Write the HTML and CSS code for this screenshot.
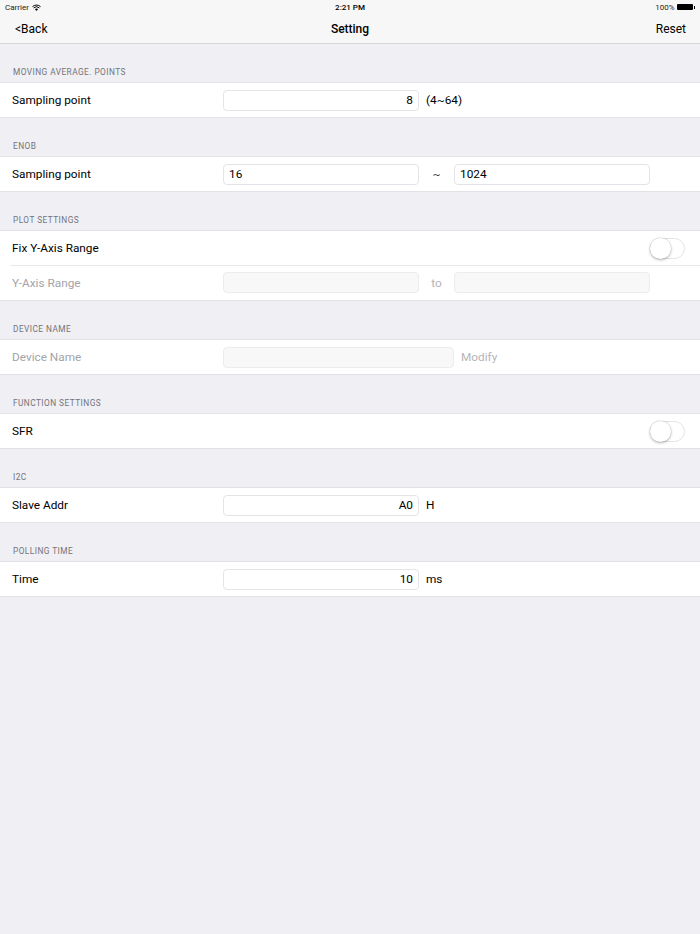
FILE: index.html
```html
<!DOCTYPE html>
<html>
<head>
<meta charset="utf-8">
<link rel="stylesheet" href="styles.css">
</head>
<body>
<div class="top">
  <div class="status">
    <span class="carrier">Carrier
      <svg class="wifi" width="9" height="7" viewBox="0 0 9 7"><path d="M4.5 7 L2.9 5.1 A2.4 2.4 0 0 1 6.1 5.1 Z" fill="#000"/><path d="M1.7 3.9 A4.2 4.2 0 0 1 7.3 3.9" stroke="#000" stroke-width="1" fill="none"/><path d="M0.5 2.6 A6 6 0 0 1 8.5 2.6" stroke="#000" stroke-width="1" fill="none"/></svg>
    </span>
    <span class="time">2:21 PM</span>
    <span class="batt">100%
      <span class="battery"></span><span class="battery-tip"></span>
    </span>
  </div>
  <div class="nav">
    <span class="nav-left">&lt;Back</span>
    <span class="nav-title">Setting</span>
    <span class="nav-right">Reset</span>
  </div>
</div>

<div class="section-header">MOVING AVERAGE. POINTS</div>
<div class="group">
  <div class="row">
    <span class="label">Sampling point</span>
    <span class="field right">8</span>
    <span class="suffix">(4~64)</span>
  </div>
</div>

<div class="section-header">ENOB</div>
<div class="group">
  <div class="row">
    <span class="label">Sampling point</span>
    <span class="field">16</span>
    <span class="mid">~</span>
    <span class="field">1024</span>
  </div>
</div>

<div class="section-header">PLOT SETTINGS</div>
<div class="group">
  <div class="row">
    <span class="label">Fix Y-Axis Range</span>
    <span class="spacer"></span>
    <span class="switch"><span class="knob"></span></span>
  </div>
  <div class="row sep disabled">
    <span class="label">Y-Axis Range</span>
    <span class="field off"></span>
    <span class="mid">to</span>
    <span class="field off"></span>
  </div>
</div>

<div class="section-header">DEVICE NAME</div>
<div class="group">
  <div class="row disabled">
    <span class="label">Device Name</span>
    <span class="field off wide"></span>
    <span class="suffix">Modify</span>
  </div>
</div>

<div class="section-header">FUNCTION SETTINGS</div>
<div class="group">
  <div class="row">
    <span class="label">SFR</span>
    <span class="spacer"></span>
    <span class="switch"><span class="knob"></span></span>
  </div>
</div>

<div class="section-header">I2C</div>
<div class="group">
  <div class="row">
    <span class="label">Slave Addr</span>
    <span class="field right">A0</span>
    <span class="suffix">H</span>
  </div>
</div>

<div class="section-header">POLLING TIME</div>
<div class="group">
  <div class="row">
    <span class="label">Time</span>
    <span class="field right">10</span>
    <span class="suffix">ms</span>
  </div>
</div>
</body>
</html>
```

FILE: styles.css
```css
* { box-sizing: border-box; }
html, body {
  margin: 0;
  padding: 0;
  background: #efeff4;
  font-family: Roboto, "Liberation Sans", sans-serif;
  color: #000;
}
body { width: 700px; height: 934px; }

.top {
  background: #f7f7f7;
  border-bottom: 1px solid #d6d6da;
  height: 44px;
}
.status {
  height: 14px;
  display: flex;
  align-items: center;
  justify-content: space-between;
  padding: 0 5px;
  font-size: 8px;
  position: relative;
}
.carrier { display: flex; align-items: center; gap: 3px; color: #222; }
.time {
  position: absolute;
  left: 0; right: 0;
  text-align: center;
  font-weight: 500;
  font-size: 8px;
}
.batt { display: flex; align-items: center; gap: 2px; color: #222; }
.battery {
  width: 16px; height: 6px;
  background: #000;
  border-radius: 1px;
  display: inline-block;
}
.battery-tip { width: 1.5px; height: 3px; background: #000; margin-left: -1px; }

.nav {
  height: 29px;
  display: flex;
  align-items: center;
  justify-content: space-between;
  padding: 0 14px 0 15px;
  font-size: 12px;
  position: relative;
}
.nav-title {
  position: absolute;
  left: 0; right: 0;
  text-align: center;
  font-weight: 500;
}

.section-header {
  height: 38px;
  padding: 0 0 5px 13px;
  display: flex;
  align-items: flex-end;
  font-size: 8.3px;
  color: #737378;
  letter-spacing: 0.45px;
}
.group {
  background: #fff;
  border-top: 1px solid #e1e1e6;
  border-bottom: 1px solid #e1e1e6;
}
.row {
  height: 34px;
  display: flex;
  align-items: center;
  padding-left: 12px;
  font-size: 11.8px;
  position: relative;
}
.row.sep { height: 35px; }
.row.sep::after {
  content: "";
  position: absolute;
  top: 0; left: 10px; right: 0;
  height: 1px;
  background: #e8e8ec;
}
.label { width: 211px; flex: none; }
.disabled .label { color: #a3a3a8; }
.field {
  width: 196px;
  height: 21px;
  border: 1px solid #e4e4e8;
  border-radius: 4px;
  padding: 0 5px;
  display: flex;
  align-items: center;
  font-size: 11.8px;
  flex: none;
  background: #fff;
}
.field.right { justify-content: flex-end; }
.field.off { background: #f8f8f8; border-color: #ececef; }
.field.wide { width: 231px; }
.suffix { margin-left: 7px; font-size: 11.8px; }
.disabled .suffix { color: #b4b4b8; }
.mid { width: 35px; text-align: center; font-size: 11.8px; color: #333; }
.disabled .mid { color: #b4b4b8; }
.spacer { flex: 1; }
.switch {
  width: 35px;
  height: 21px;
  border: 1px solid #e3e3e6;
  border-radius: 11px;
  margin-right: 15px;
  position: relative;
  background: #fff;
}
.knob {
  position: absolute;
  left: -1px; top: -1px;
  width: 21px; height: 21px;
  border-radius: 50%;
  background: #fff;
  box-shadow: 0 1px 3px rgba(0,0,0,0.3), 0 0 0 0.5px rgba(0,0,0,0.08);
}
```
